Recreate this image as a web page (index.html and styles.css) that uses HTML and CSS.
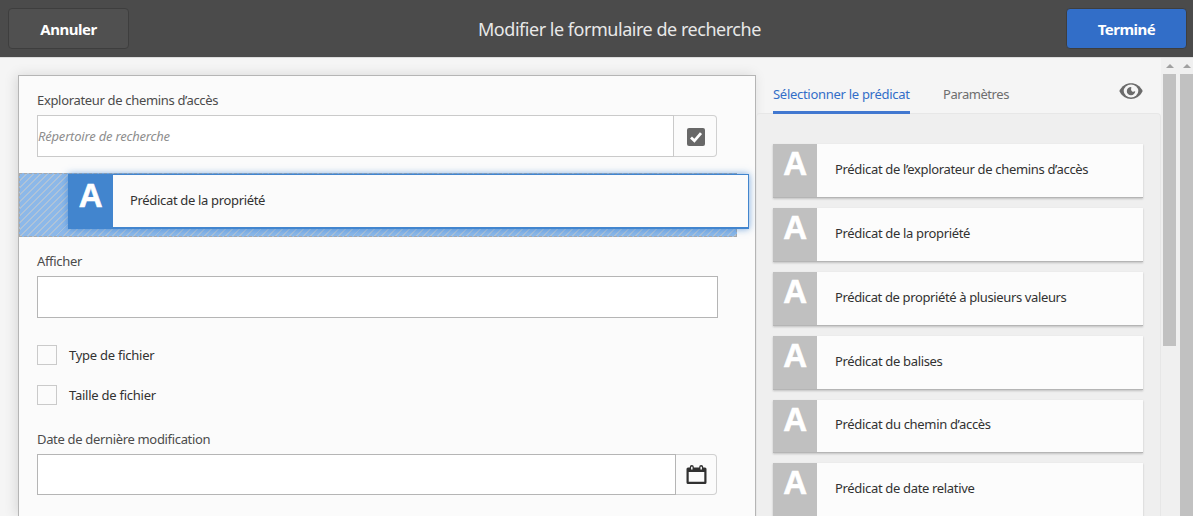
FILE: index.html
```html
<!DOCTYPE html>
<html lang="fr">
<head>
<meta charset="utf-8">
<title>Modifier le formulaire de recherche</title>
<link rel="stylesheet" href="styles.css">
</head>
<body>
<header class="topbar">
  <button class="btn btn-cancel">Annuler</button>
  <h1 class="title">Modifier le formulaire de recherche</h1>
  <button class="btn btn-done">Terminé</button>
</header>
<main class="workspace">
  <section class="form">
    <label class="label">Explorateur de chemins d’accès</label>
    <div class="field field-path">
      <div class="input"><span class="placeholder">Répertoire de recherche</span></div>
      <div class="addon">
        <svg width="18" height="18" viewBox="0 0 18 18"><rect width="18" height="18" rx="2" fill="#686868"/><path d="M4 9.5l3.4 3.3L14 5.2" fill="none" stroke="#fff" stroke-width="2.8"/></svg>
      </div>
    </div>
    <div class="dropzone">
      <div class="dragged"><div class="drag-badge">A</div><div class="drag-text">Prédicat de la propriété</div></div>
    </div>
    <label class="label label-show">Afficher</label>
    <div class="field field-show"><div class="input"></div></div>
    <label class="check"><span class="box"></span><span>Type de fichier</span></label>
    <label class="check check-size"><span class="box"></span><span>Taille de fichier</span></label>
    <label class="label label-date">Date de dernière modification</label>
    <div class="field field-date">
      <div class="input"></div>
      <div class="addon">
        <svg width="21" height="20" viewBox="0 0 21 20"><path fill="#303030" fill-rule="evenodd" d="M2 2.500h1.800V2a2 2 0 0 1 4 0v.5h5.400V2a2 2 0 0 1 4 0v.5H19q1.500 0 1.500 1.500V17.500Q20.500 19 19 19H2Q.5 19 .5 17.500V4Q.5 2.500 2 2.500zM2.700 7v9.800h15.600V7z"/><path d="M5.800 1.800v2.700M15.200 1.800v2.700" stroke="#ededed" stroke-width="1.600"/></svg>
      </div>
    </div>
  </section>
  <aside class="side">
    <nav class="tabs">
      <span class="tab active">Sélectionner le prédicat</span>
      <span class="tab tab-settings">Paramètres</span>
      <svg class="eye" width="24" height="16" viewBox="0 0 24 16"><path d="M.3 8C5-2.500 19-2.500 23.700 8C19 18.500 5 18.500.3 8z" fill="#6b6b6b"/><ellipse cx="12" cy="8" rx="7.300" ry="6.500" fill="#f5f5f5"/><path fill="#6b6b6b" d="M12.300 3.900a4.200 4.200 0 1 0 3.900 4.100q-2 1.300-3.300.2t-.6-4.300z"/></svg>
    </nav>
    <div class="panel">
      <div class="item"><div class="badge">A</div><div class="name">Prédicat de l’explorateur de chemins d’accès</div></div>
      <div class="item"><div class="badge">A</div><div class="name">Prédicat de la propriété</div></div>
      <div class="item"><div class="badge">A</div><div class="name name-multi">Prédicat de propriété à plusieurs valeurs</div></div>
      <div class="item"><div class="badge">A</div><div class="name">Prédicat de balises</div></div>
      <div class="item short"><div class="badge">A</div><div class="name">Prédicat du chemin d’accès</div></div>
      <div class="item"><div class="badge">A</div><div class="name">Prédicat de date relative</div></div>
    </div>
  </aside>
  <div class="scroll"><i class="arrow"></i><i class="thumb thumb-inner"></i></div>
  <div class="scroll scroll-page"><i class="arrow"></i><i class="thumb"></i></div>
</main>
</body>
</html>
```
FILE: styles.css
```css
* { box-sizing: border-box; }
body {
  margin: 0;
  height: 516px;
  overflow: hidden;
  background: #f5f5f5;
  color: #323232;
  font: 13px/20px "Noto Sans", "Open Sans", sans-serif;
  letter-spacing: -.33px;
  white-space: nowrap;
}
.topbar {
  height: 57px;
  padding: 8px 6px 8px 8px;
  background: #4b4b4b;
  display: flex;
  align-items: center;
}
.btn {
  width: 121px;
  height: 41px;
  padding: 1px 0 0;
  border: 1px solid #3e3e3e;
  border-radius: 4px;
  background: #505050;
  color: #fff;
  font: bold 15px/20px "Noto Sans", sans-serif;
  letter-spacing: -.5px;
}
.btn-done { background: #326ec8; margin-left: auto; }
.title {
  margin: 0 0 0 349px;
  color: #e8e8e8;
  font-size: 18px;
  line-height: 24px;
  font-weight: 400;
  letter-spacing: -.47px;
}
.workspace {
  height: 459px;
  border-top: 1px solid #dcdcdc;
  display: flex;
  overflow: hidden;
}
.form {
  width: 738px;
  margin: 17px 0 0 18px;
  padding: 14px 0 0 18px;
  flex: none;
  border: 1px solid #b5b5b5;
  border-bottom: 0;
  background: #fbfbfb;
  box-shadow: -2px 0 12px rgba(0, 0, 0, .12);
}
.label { display: block; height: 20px; width: max-content; color: #4b4b4b; }
.field { display: flex; width: 680px; }
.input { flex: 1; background: #fff; border: 1px solid #b5b5b5; }
.addon {
  display: flex;
  align-items: center;
  justify-content: center;
  border: 1px solid #d0d0d0;
  border-left: 0;
  border-radius: 0 4px 4px 0;
}
.field-path { height: 42px; margin-top: 5px; }
.field-path .input { border-color: #cacaca; }
.field-path .addon { width: 43px; padding: 2px 0 0 1px; }
.placeholder {
  display: block;
  padding-top: 10px;
  color: #8e8e8e;
  font-style: italic;
  letter-spacing: -.2px;
}
.dropzone {
  width: 718px;
  height: 64px;
  margin: 16px 0 0 -18px;
  padding: 0 0 0 48px;
  border: 1px dashed #a9a9a9;
  background: repeating-linear-gradient(135deg, #8cb8e9 0 3.6px, #aec3d9 3.6px 5px);
}
.dragged {
  width: 681px;
  height: 55px;
  border: solid #4285ce;
  border-width: 1px 1px 2px 0;
  background: #fbfbfb;
  display: flex;
  box-shadow: 0 0 7px rgba(45, 120, 205, .65);
}
.drag-badge {
  width: 45px;
  height: 54px;
  margin-top: -1px;
  background: #4285ce;
  color: #fff;
  font: bold 33px/43px "Liberation Sans", Arial, sans-serif;
  -webkit-text-stroke: .6px #fff;
  text-align: center;
}
.drag-text { padding: 15px 0 0 17px; }
.label-show { margin-top: 14px; }
.field-show { height: 42px; width: 681px; margin-top: 5px; }
.check { display: flex; align-items: center; gap: 12px; height: 20px; margin-top: 27px; letter-spacing: -.25px; }
.check-size { margin-top: 20px; }
.box { width: 20px; height: 20px; border: 1px solid #cacaca; }
.label-date { margin-top: 24px; }
.field-date { height: 41px; margin-top: 5px; }
.field-date .addon { width: 41px; }
.side { width: 405px; flex: none; }
.tabs { height: 56px; padding-left: 17px; display: flex; }
.tab { height: 56px; padding-top: 26px; color: #6e6e6e; }
.active {
  position: relative;
  width: 137px;
  color: #326ec8;
  border-bottom: 3px solid #4178d0;
  letter-spacing: -.29px;
}
.tab-settings { margin-left: 33px; letter-spacing: -.45px; }
.eye { margin: 25px 18px 0 auto; }
.panel {
  height: 403px;
  overflow: hidden;
  margin-top: -1px;
  padding: 30px 17px 0 16px;
  border: 1px solid #e7e7e7;
  border-bottom: 0;
  border-radius: 4px 4px 0 0;
  background: #efefef;
}
.item {
  width: 370px;
  height: 54px;
  margin-bottom: 10px;
  display: flex;
  background: #fcfcfc;
  border-bottom: 1px solid #b5b5b5;
  box-shadow: 0 1px 2px rgba(0, 0, 0, .2);
}
.short { height: 53px; }
.badge {
  width: 44px;
  background: #c0c0c0;
  color: #fff;
  font: bold 33px/40px "Liberation Sans", Arial, sans-serif;
  -webkit-text-stroke: .6px #fff;
  text-align: center;
}
.name { padding: 15px 0 0 18px; }
.name-multi { letter-spacing: -.37px; }
.short .name { padding-top: 14px; }
.scroll { width: 15px; padding-left: 1px; background: #f0f0f0; flex: none; }
.scroll-page { width: 17px; padding-left: 4px; }
.arrow {
  display: block;
  width: 8px;
  height: 4px;
  margin: 6px 0 6px 4px;
  background: #a0a0a0;
  clip-path: polygon(50% 0, 100% 100%, 0 100%);
}
.scroll-page .arrow { margin-left: 3px; }
.thumb { display: block; width: 13px; height: 442px; background: #c1c1c1; }
.thumb-inner { height: 272px; margin-left: 1px; }
```
